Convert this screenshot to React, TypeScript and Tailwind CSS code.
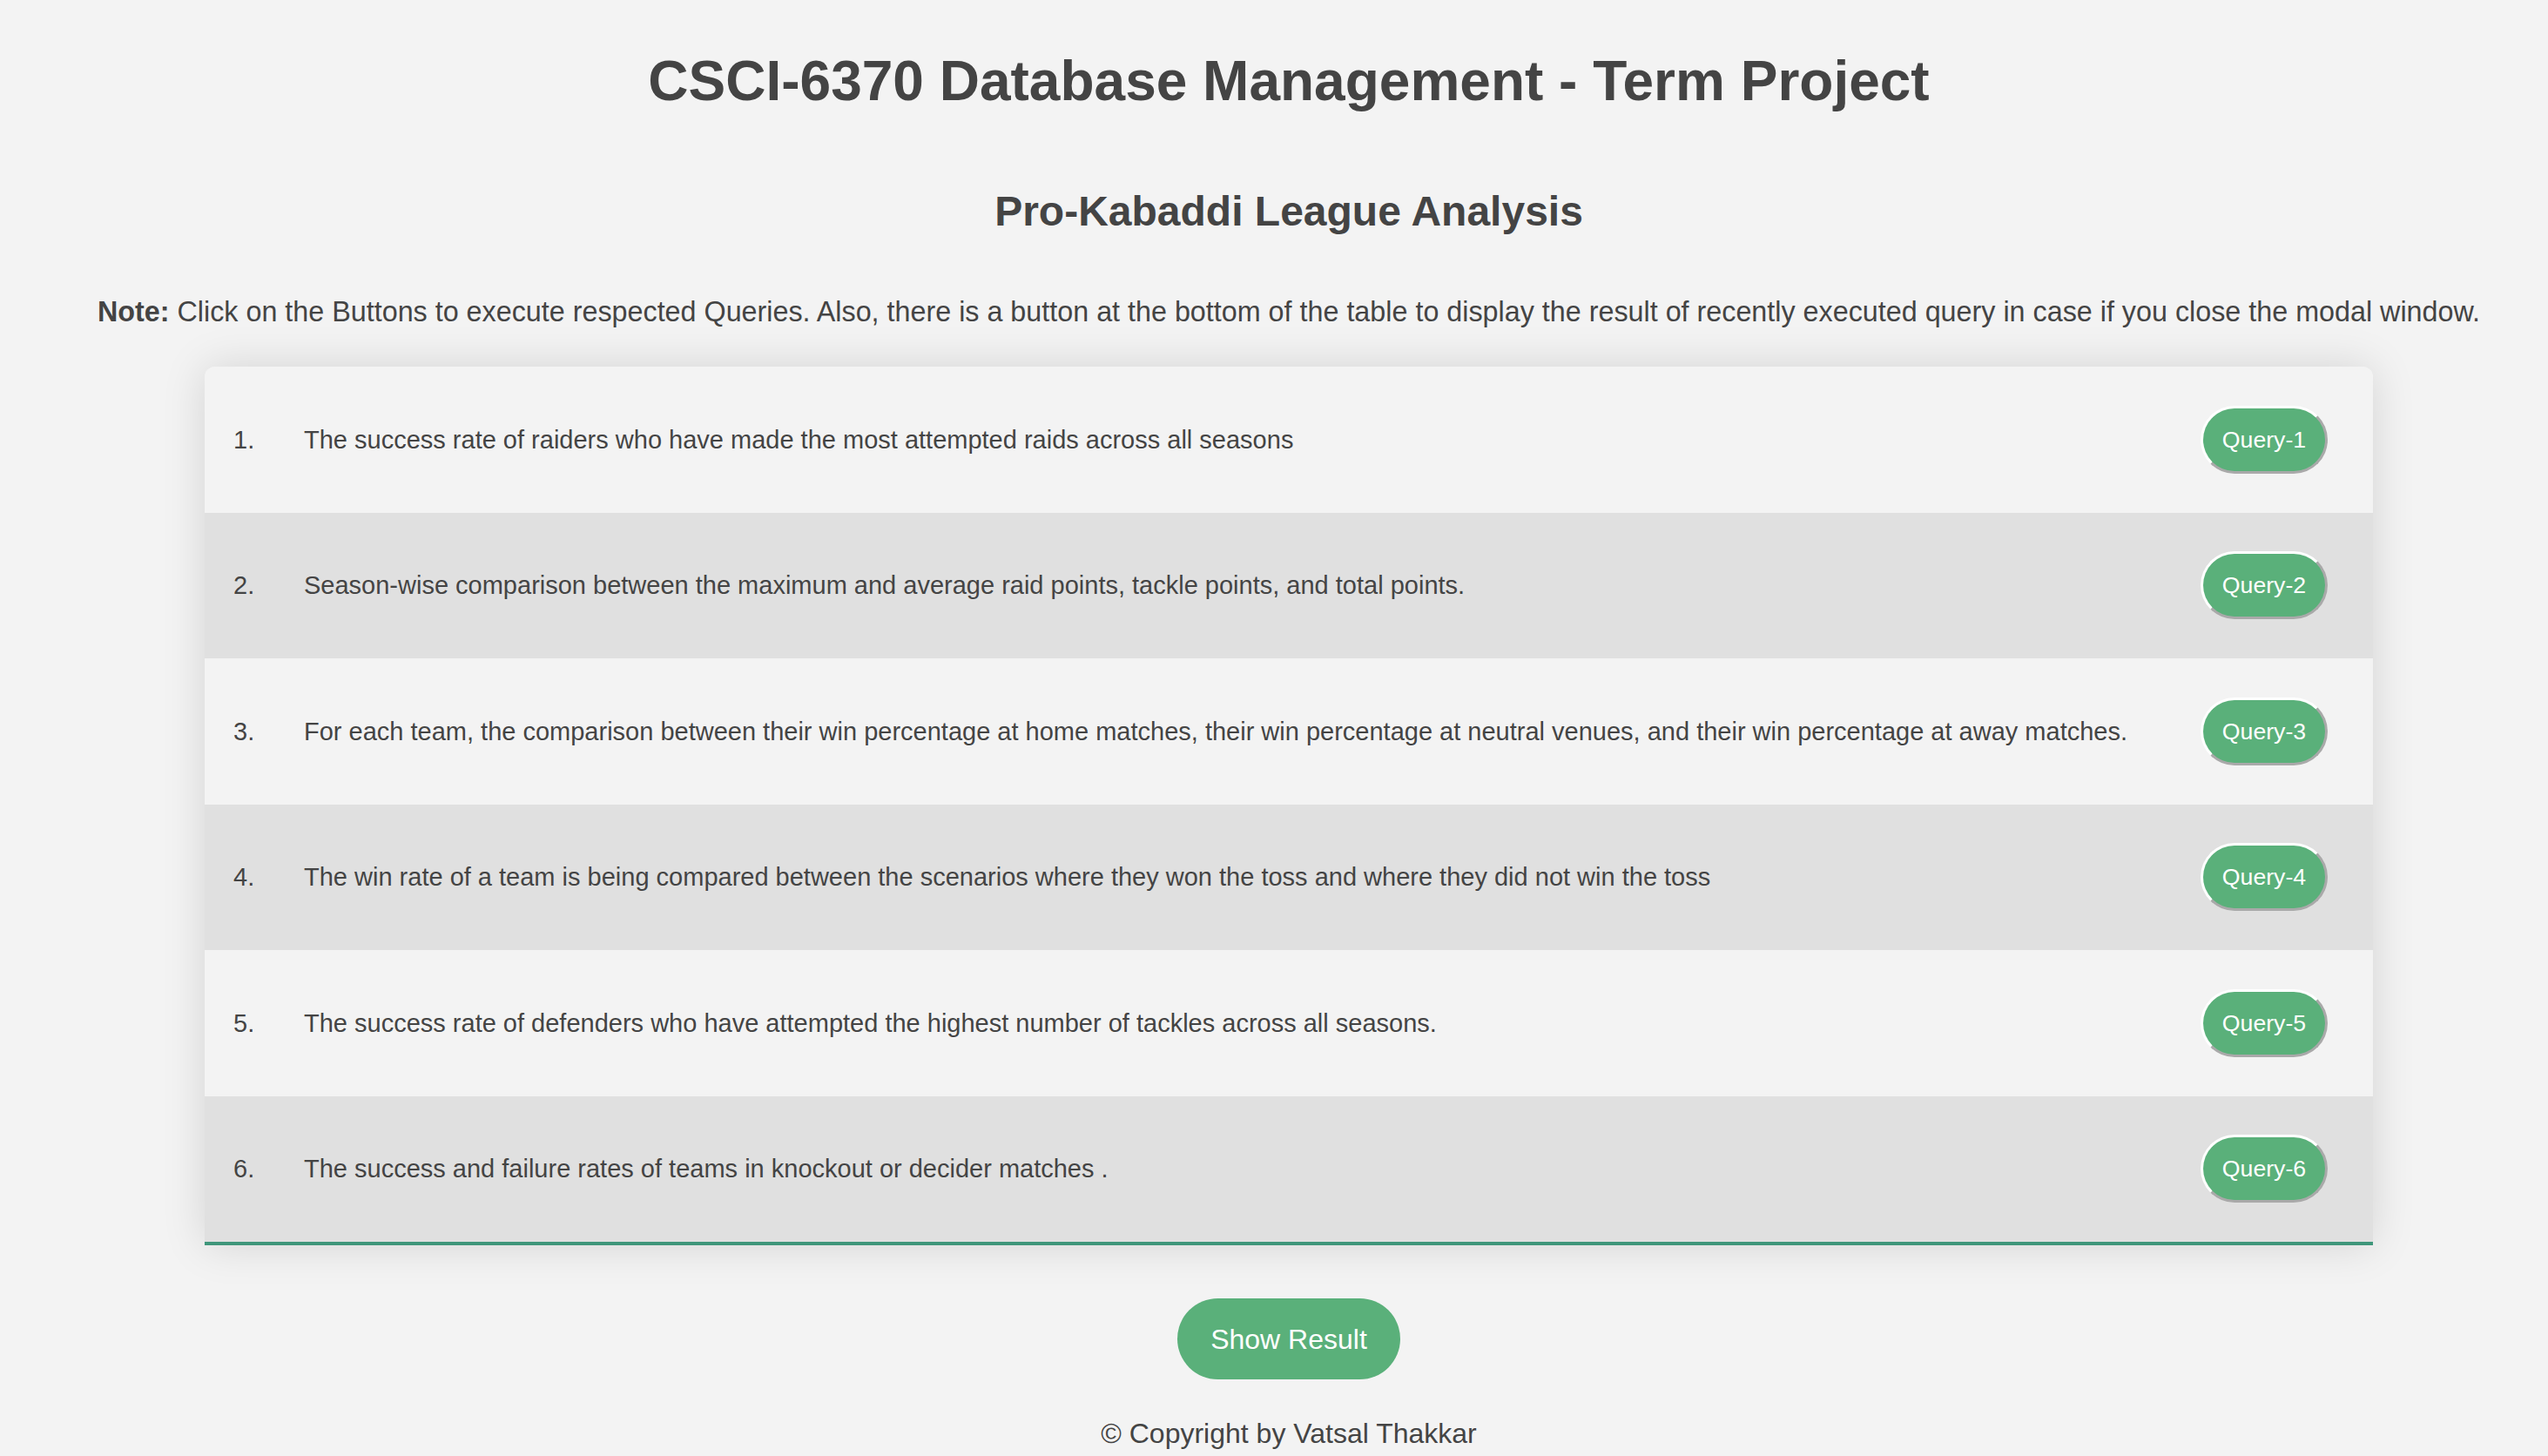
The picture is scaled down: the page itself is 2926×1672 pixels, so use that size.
import React from "react";

const rows = [
  "The success rate of raiders who have made the most attempted raids across all seasons",
  "Season-wise comparison between the maximum and average raid points, tackle points, and total points.",
  "For each team, the comparison between their win percentage at home matches, their win percentage at neutral venues, and their win percentage at away matches.",
  "The win rate of a team is being compared between the scenarios where they won the toss and where they did not win the toss",
  "The success rate of defenders who have attempted the highest number of tackles across all seasons.",
  "The success and failure rates of teams in knockout or decider matches .",
];

export default function App() {
  return (
    <div className="min-h-screen bg-[#f3f3f3] text-[#444] font-['Liberation_Sans','Helvetica_Neue',Arial,sans-serif] pl-[34px] pt-[61px] pb-[20px]">
      <h1 className="text-center text-[64px] leading-[64px] font-bold">
        CSCI-6370 Database Management - Term Project
      </h1>
      <h2 className="mt-[94px] text-center text-[48px] leading-[48px] font-bold">
        Pro-Kabaddi League Analysis
      </h2>
      <p className="mt-[75px] text-center text-[32.3px] leading-[32px] whitespace-nowrap">
        <span className="font-bold">Note:</span> Click on the Buttons to execute respected Queries. Also, there is a button at the bottom of the table to display the result of recently executed query in case if you close the modal window.
      </p>
      <div className="mx-auto mt-[47px] w-[2490px] rounded-t-[12px] overflow-hidden border-b-4 border-[#3f967a] shadow-[0_0_50px_rgba(0,0,0,0.13)]">
        {rows.map((text, i) => (
          <div
            key={i}
            className={`flex items-center h-[167.5px] pl-[33px] pr-[52px] text-[29px] leading-[34px] ${
              i % 2 === 0 ? "bg-[#f3f3f3]" : "bg-[#e0e0e0]"
            }`}
          >
            <span className="w-[81px] shrink-0">{i + 1}.</span>
            <span className="flex-1">{text}</span>
            <button className="shrink-0 w-[146px] h-[78px] rounded-full border-[3px] border-t-white border-l-white border-r-[#a9a9a9] border-b-[#a9a9a9] bg-[#5ab07a] text-white text-[26.67px] leading-[30px]">
              Query-{i + 1}
            </button>
          </div>
        ))}
      </div>
      <div className="mt-[61px] flex justify-center">
        <button className="h-[93px] px-[38px] rounded-full bg-[#5ab07a] text-white text-[32px] leading-[32px]">
          Show Result
        </button>
      </div>
      <p className="mt-[46px] text-center text-[32px] leading-[32px]">
        © Copyright by Vatsal Thakkar
      </p>
    </div>
  );
}
